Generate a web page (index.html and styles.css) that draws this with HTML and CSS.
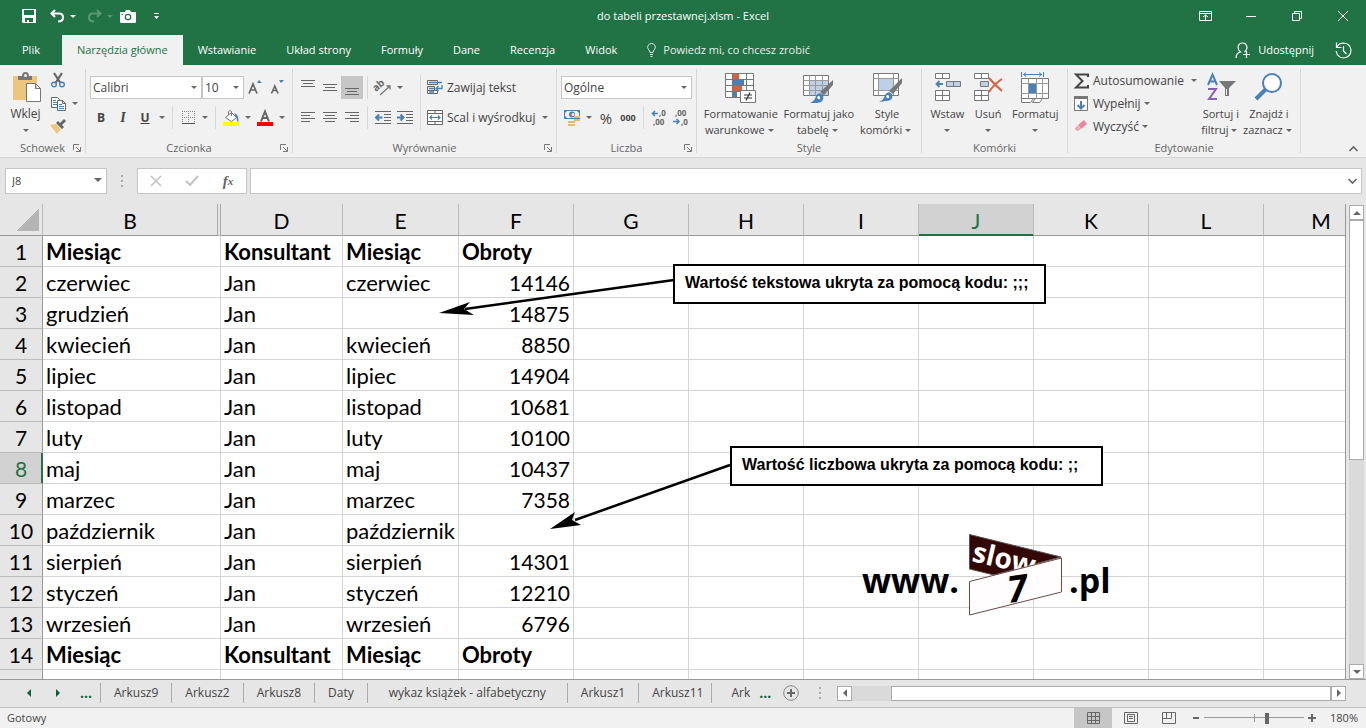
FILE: index.html
```html
<!DOCTYPE html>
<html lang="pl">
<head>
    <meta charset="UTF-8">
    <meta name="viewport" content="width=device-width, initial-scale=1.0">
    <title>do tabeli przestawnej.xlsm - Excel</title>
    <link rel="stylesheet" href="styles.css">
</head>
<body>
    <header class="titlebar">
        <div class="quick">
            <button aria-label="Zapisz"><svg width="14" height="14" viewBox="0 0 14 14"><path fill="#fff" fill-rule="evenodd" d="M0 0h14v14H1l-1-1zM2 1v5h10V1zM3 9v4h2v-2h2v2h4V9z"/></svg></button>
            <button aria-label="Cofnij"><svg width="15" height="14" viewBox="0 0 15 14"><path fill="none" stroke="#fff" stroke-width="2" d="M5 1 1.500 4.500 5 8M2 4.500h7q4 0 4 4t-5 4"/></svg><i class="caret"></i></button>
            <button aria-label="Ponów" class="off"><svg width="15" height="14" viewBox="0 0 15 14"><path fill="none" stroke="#fff" stroke-width="2" d="M10 1l3.500 3.500L10 8M13 4.500H6q-4 0-4 4t5 4"/></svg><i class="caret"></i></button>
            <button aria-label="Aparat"><svg width="16" height="13" viewBox="0 0 16 13"><path fill="#fff" d="M0 3q0-1 1-1h4l1-2h4l1 2h4q1 0 1 1v9q0 1-1 1H1q-1 0-1-1z"/><circle cx="8" cy="7" r="2.700" fill="none" stroke="#217346" stroke-width="1.200"/><path fill="#217346" d="M1.500 4h1.500v1H1.500z"/></svg></button>
            <button aria-label="Dostosuj"><svg width="5" height="7" viewBox="0 0 5 7"><path fill="#fff" d="M0 0h5v1H0zM0 3h5L2.500 6z"/></svg></button>
        </div>
        <div class="title">do tabeli przestawnej.xlsm - Excel</div>
        <div class="window">
            <button aria-label="Opcje wstążki"><svg width="13" height="10" viewBox="0 0 13 10"><path fill="none" stroke="#fff" d="M.5.500h12v9H.5zM.5 2.500h12M6.500 9V4M4 6l2.500-2L9 6"/></svg></button>
            <button aria-label="Minimalizuj"><svg width="10" height="10" viewBox="0 0 10 10"><path stroke="#fff" d="M0 5.500h10"/></svg></button>
            <button aria-label="Przywróć"><svg width="10" height="10" viewBox="0 0 10 10"><path fill="none" stroke="#fff" d="M.5 2.500h7v7h-7zM2.500 2V.5h7v7H8"/></svg></button>
            <button aria-label="Zamknij"><svg width="10" height="10" viewBox="0 0 10 10"><path stroke="#fff" d="M0 0l10 10M10 0 0 10"/></svg></button>
        </div>
    </header>

    <nav class="tabs">
        <a href="#" class="file">Plik</a>
        <a href="#" class="active">Narzędzia główne</a>
        <a href="#">Wstawianie</a>
        <a href="#">Układ strony</a>
        <a href="#">Formuły</a>
        <a href="#">Dane</a>
        <a href="#">Recenzja</a>
        <a href="#">Widok</a>
        <a href="#" class="tell"><svg width="9" height="14" viewBox="0 0 9 14"><path fill="none" stroke="#e4efe9" d="M3 9.500Q3 8 1.500 6.500 0 4.500 1 2.500 2.500.5 4.500.5T8 2.500q1 2-.5 4Q6 8 6 9.500zM3 11.500h3M3.500 13.500h2"/></svg>Powiedz mi, co chcesz zrobić</a>
        <a href="#" class="share"><svg width="16" height="17" viewBox="0 0 16 17"><path fill="none" stroke="#fff" stroke-width="1.200" d="M1 16q0-5 4.500-6Q3 8 3 5.500 3.500 1 7.500 1T12 5.500Q12 8 9.500 10M11.500 9v7M8 12.500h7"/></svg>Udostępnij</a>
        <button aria-label="Historia"><svg width="17" height="17" viewBox="0 0 17 17"><path fill="none" stroke="#fff" stroke-width="1.200" d="M2 5q2-4 6.500-4 7 .5 7.500 7.500-.5 7-7.500 7.500Q2 15.500 1.200 9M1.500.5v5h5M8.500 4v5l3 3"/></svg></button>
    </nav>

    <section class="ribbon">
        <div class="group clipboard">
            <div class="tools">
                <button class="big">
                    <svg width="30" height="32" viewBox="0 0 30 32"><path fill="#ecc57f" d="M2 4h24v24H2z"/><path fill="#777" d="M7 4h4q0-4 3.500-4T18 4h3v4H7z"/><circle cx="14.500" cy="3.500" r="1.500" fill="#f1f1f1"/><path fill="#fff" stroke="#777" d="M15.500 11.500h9l5 5v13h-14zM24.500 11.500v5h5"/></svg>
                    <span>Wklej</span><i class="caret"></i>
                </button>
                <div class="stack">
                    <button class="tool" aria-label="Wytnij"><svg width="14" height="15" viewBox="0 0 14 15"><path fill="none" stroke="#666" stroke-width="2.200" d="M3 0l6.500 10M11 0 4.500 10"/><g fill="none" stroke="#4a80b8" stroke-width="1.400"><circle cx="3" cy="11.500" r="2.300"/><circle cx="11" cy="11.500" r="2.300"/></g></svg></button>
                    <button class="tool" aria-label="Kopiuj"><svg width="15" height="14" viewBox="0 0 15 14"><path fill="#fff" stroke="#666" d="M.5.500h6l2 2v8h-8z"/><path stroke="#4a80b8" d="M2 3.500h3M2 5.500h4M2 7.500h4"/><path fill="#fff" stroke="#666" d="M6.500 3.500h5l3 3v7h-8zM11.500 3.500v3h3"/><path stroke="#4a80b8" d="M8 7.500h3M8 9.500h5M8 11.500h5"/></svg></button><i class="caret"></i>
                    <button class="tool" aria-label="Malarz formatów"><svg width="16" height="15" viewBox="0 0 16 15"><path fill="#ecc57f" d="M0 6l6-1 5 5-4 5z"/><path fill="#666" d="M6 4l2-2 2 2 4-4 2 2-4 4 2 2-2 2z"/></svg></button>
                </div>
            </div>
            <div class="caption">Schowek<svg class="launch" width="8" height="8" viewBox="0 0 8 8"><path fill="none" stroke="#777" d="M.5 6V.5H6M3 3l4 4M7.500 3v4.500H3"/></svg></div>
        </div>

        <div class="group font">
            <div class="tools rows">
                <div class="row">
                    <label class="drop face"><select aria-label="Czcionka"><option>Calibri</option></select></label>
                    <label class="drop size"><select aria-label="Rozmiar czcionki"><option>10</option></select></label>
                    <button class="tool grow" aria-label="Zwiększ"><svg width="14" height="15" viewBox="0 0 14 15"><path fill="none" stroke="#666" stroke-width="1.700" d="M1 13.500 5 4l4 9.500M2.500 10h5"/><path fill="#4a80b8" d="M9 3l2-3 3 3z"/></svg></button>
                    <button class="tool" aria-label="Zmniejsz"><svg width="14" height="15" viewBox="0 0 14 15"><path fill="none" stroke="#666" stroke-width="1.600" d="M1.500 13.500 4.800 6l3.200 7.500M3 10.500h4"/><path fill="#4a80b8" d="M9 0h5l-3 3z"/></svg></button>
                </div>
                <div class="row">
                    <button class="tool"><b>B</b></button>
                    <button class="tool italic"><b>I</b></button>
                    <button class="tool under"><b>U</b></button>
                    <i class="caret"></i>
                    <span class="sep"></span>
                    <button class="tool" aria-label="Obramowanie"><svg width="13" height="13" viewBox="0 0 13 13"><path fill="none" stroke="#888" stroke-dasharray="1 1" d="M0 .5h13M0 6.500h13M.5 0v12M6.500 0v12M12.500 0v12"/><path stroke="#555" d="M0 12.500h13"/></svg></button>
                    <i class="caret"></i>
                    <span class="sep"></span>
                    <button class="tool" aria-label="Wypełnienie"><svg width="17" height="16" viewBox="0 0 17 16"><path fill="#fff" stroke="#777" d="M2.500 7.500l6-5 5 5-5 4zM5.500 5V1.500q1.500-2 3 0V6"/><path fill="#4a80b8" d="M11 3q5 1 4.500 9-2-1-2-4z"/><path fill="#ff0" d="M0 12h16v4H0z"/></svg></button>
                    <i class="caret"></i>
                    <button class="tool" aria-label="Kolor czcionki"><svg width="16" height="16" viewBox="0 0 16 16"><path fill="none" stroke="#666" stroke-width="2" d="M4 11.500 8 1.500l4 10M5.500 8h5"/><path fill="#f00" d="M0 12h16v4H0z"/></svg></button>
                    <i class="caret"></i>
                </div>
            </div>
            <div class="caption">Czcionka<svg class="launch" width="8" height="8" viewBox="0 0 8 8"><path fill="none" stroke="#777" d="M.5 6V.5H6M3 3l4 4M7.500 3v4.500H3"/></svg></div>
        </div>

        <div class="group align">
            <div class="tools">
                <div class="rows">
                    <div class="row">
                        <button class="tool" aria-label="Do góry"><svg width="14" height="16" viewBox="0 0 14 16"><path stroke="#666" d="M0 .5h14M2 3.500h10M0 6.500h14"/></svg></button>
                        <button class="tool" aria-label="Do środka"><svg width="14" height="16" viewBox="0 0 14 16"><path stroke="#666" d="M0 4.500h14M2 7.500h10M0 10.500h14"/></svg></button>
                        <button class="tool on" aria-label="Do dołu"><svg width="14" height="16" viewBox="0 0 14 16"><path stroke="#666" d="M0 8.500h14M2 11.500h10M0 14.500h14"/></svg></button>
                        <span class="sep"></span>
                        <button class="tool" aria-label="Orientacja"><svg width="17" height="16" viewBox="0 0 17 16"><text x="1" y="12" class="ab" transform="rotate(-42 1 12)">ab</text><path fill="none" stroke="#777" stroke-width="1.300" d="M5 15 15 6M11.500 6H15v3.500"/></svg></button>
                        <i class="caret"></i>
                    </div>
                    <div class="row">
                        <button class="tool" aria-label="Do lewej"><svg width="14" height="11" viewBox="0 0 14 11"><path stroke="#666" d="M0 .5h14M0 3.500h9M0 6.500h14M0 9.500h9"/></svg></button>
                        <button class="tool" aria-label="Wyśrodkuj"><svg width="14" height="11" viewBox="0 0 14 11"><path stroke="#666" d="M0 .5h14M2 3.500h10M0 6.500h14M2 9.500h10"/></svg></button>
                        <button class="tool" aria-label="Do prawej"><svg width="14" height="11" viewBox="0 0 14 11"><path stroke="#666" d="M0 .5h14M5 3.500h9M0 6.500h14M5 9.500h9"/></svg></button>
                        <span class="sep"></span>
                        <button class="tool" aria-label="Zmniejsz wcięcie"><svg width="16" height="13" viewBox="0 0 16 13"><path stroke="#666" d="M0 .5h16M9 3.500h7M9 6.500h7M9 9.500h7M0 12.500h16"/><path fill="none" stroke="#4a80b8" stroke-width="2" d="M7.500 6.500H1M4 3.500l-3 3 3 3"/></svg></button>
                        <button class="tool" aria-label="Zwiększ wcięcie"><svg width="16" height="13" viewBox="0 0 16 13"><path stroke="#666" d="M0 .5h16M9 3.500h7M9 6.500h7M9 9.500h7M0 12.500h16"/><path fill="none" stroke="#4a80b8" stroke-width="2" d="M0 6.500h6.500M3.500 3.500l3 3-3 3"/></svg></button>
                    </div>
                </div>
                <span class="sep tall"></span>
                <div class="rows">
                    <button class="text"><svg width="16" height="15" viewBox="0 0 16 15"><path fill="none" stroke="#666" d="M.5.500h10v4H.5zM.5 6.500h7v4H.5zM.5 10.500h10v3H.5z"/><path fill="none" stroke="#4a80b8" stroke-width="1.300" d="M2 2.500h13M2 8.500h5M2 12h5M15 5v3.500H9.500M11.500 6 9 8.500l2.500 2.500"/></svg>Zawijaj tekst</button>
                    <div class="row"><button class="text"><svg width="16" height="15" viewBox="0 0 16 15"><path fill="#fff" stroke="#666" d="M.5.500h15v14H.5zM.5 3.500h15M.5 11.500h15M8 .5v3M8 11.500v3"/><path fill="none" stroke="#4a80b8" stroke-width="1.200" d="M2.500 7.500h11M5 5.500l-2 2 2 2M11 5.500l2 2-2 2"/></svg>Scal i wyśrodkuj</button><i class="caret"></i></div>
                </div>
            </div>
            <div class="caption">Wyrównanie<svg class="launch" width="8" height="8" viewBox="0 0 8 8"><path fill="none" stroke="#777" d="M.5 6V.5H6M3 3l4 4M7.500 3v4.500H3"/></svg></div>
        </div>

        <div class="group number">
            <div class="tools rows">
                <label class="drop format"><select aria-label="Format liczb"><option>Ogólne</option></select></label>
                <div class="row">
                    <button class="tool" aria-label="Format księgowy"><svg width="17" height="16" viewBox="0 0 17 16"><path fill="#4a80b8" d="M0 0h16v9H0z"/><path fill="#f1f1f1" d="M1 3l2-2h10l2 2v3l-2 2H3L1 6z"/><circle cx="8" cy="4.500" r="3" fill="#4a80b8"/><circle cx="9" cy="4.500" r="1.500" fill="#f1f1f1"/><path stroke="#ecb863" stroke-width="2" d="M10 7h6M10 10h6M4 12h7M4 15h7"/></svg></button>
                    <i class="caret"></i>
                    <button class="tool percent">%</button>
                    <button class="tool zeros">000</button>
                    <span class="sep"></span>
                    <button class="tool" aria-label="Zwiększ dziesiętne"><svg width="16" height="16" viewBox="0 0 16 16"><text x="8" y="6" class="dec">,0</text><text x="2" y="15" class="dec">,00</text><path fill="none" stroke="#4a80b8" stroke-width="1.600" d="M7 3.500H1.500M4 1 1.500 3.500 4 6"/></svg></button>
                    <button class="tool" aria-label="Zmniejsz dziesiętne"><svg width="16" height="16" viewBox="0 0 16 16"><text x="2" y="6" class="dec">,00</text><text x="8" y="15" class="dec">,0</text><path fill="none" stroke="#4a80b8" stroke-width="1.600" d="M0 11.500h6M3.500 9 6 11.500 3.500 14"/></svg></button>
                </div>
            </div>
            <div class="caption">Liczba<svg class="launch" width="8" height="8" viewBox="0 0 8 8"><path fill="none" stroke="#777" d="M.5 6V.5H6M3 3l4 4M7.500 3v4.500H3"/></svg></div>
        </div>

        <div class="group styles">
            <div class="tools">
                <button class="big">
                    <svg width="31" height="32" viewBox="0 0 31 32"><path fill="#fff" stroke="#777" d="M.5 1.500h28v24H.5z"/><path fill="none" stroke="#777" d="M.5 7.500h28M.5 13.500h28M.5 19.500h28M7.500 1.500v24M21.500 1.500v24"/><path fill="#d9603f" d="M8 2h6v5H8zM8 14h9v5H8z"/><path fill="#4a80b8" d="M8 8h11v5H8zM8 20h4v5H8z"/><path fill="#fff" stroke="#777" d="M15.500 18.500h15v12h-15z"/><path stroke="#333" stroke-width="1.200" d="M19 23h8M19 26h8M25 20.500l-4 8"/></svg>
                    <span>Formatowanie</span><span>warunkowe<i class="caret"></i></span>
                </button>
                <button class="big">
                    <svg width="31" height="32" viewBox="0 0 31 32"><path fill="#fff" stroke="#777" d="M.5 3.500h25v20H.5z"/><path fill="#bdd0e8" d="M7 9h18v14H7z"/><path fill="none" stroke="#999" d="M.5 8.500h25M.5 13.500h25M.5 18.500h25M6.500 3.500v20M12.500 3.500v20M19.500 3.500v20"/><path fill="#777" d="M30 8v5L21 23l-4-3z"/><path fill="#4a80b8" d="M7 31q5-2 6-7 3-5 7-1 2 7-6 8z"/><path fill="#fff" d="M14 25q2-2 3 0 1 3-2 2z"/></svg>
                    <span>Formatuj jako</span><span>tabelę<i class="caret"></i></span>
                </button>
                <button class="big">
                    <svg width="31" height="32" viewBox="0 0 31 32"><path fill="#fff" stroke="#777" d="M1.500 1.500h25v22h-25z"/><path fill="none" stroke="#999" d="M1.500 6.500h25M1.500 18.500h25M6.500 1.500v22M21.500 1.500v22"/><path fill="#bdd0e8" d="M7 7h14v11H7z"/><path fill="#777" d="M30 6v5L21 22l-4-3z"/><path fill="#4a80b8" d="M7 30q5-2 6-7 3-5 7-1 2 7-6 7z"/><path fill="#fff" d="M14 24q2-2 3 0 1 3-2 2z"/></svg>
                    <span>Style</span><span>komórki<i class="caret"></i></span>
                </button>
            </div>
            <div class="caption">Style</div>
        </div>

        <div class="group cells">
            <div class="tools">
                <button class="big">
                    <svg width="27" height="32" viewBox="0 0 27 32"><path fill="#fff" stroke="#777" d="M1.500 1.500h14v5h-14zM8.500 1.500v5M1.500 18.500h14v10h-14zM8.500 18.500v10M1.500 23.500h14"/><path fill="#bdd0e8" stroke="#777" d="M12.500 9.500h14v5h-14zM19.500 9.500v5"/><path fill="none" stroke="#4a80b8" stroke-width="1.800" d="M9 12H2.500M5.500 9l-3 3 3 3"/></svg>
                    <span>Wstaw</span><i class="caret"></i>
                </button>
                <button class="big">
                    <svg width="30" height="32" viewBox="0 0 30 32"><path fill="#fff" stroke="#777" d="M1.500 1.500h14v5h-14zM8.500 1.500v5M1.500 18.500h14v10h-14zM8.500 18.500v10M1.500 23.500h14"/><path fill="#bdd0e8" stroke="#777" d="M7.500 9.500h8v5h-8z"/><path fill="none" stroke="#d9603f" stroke-width="2" d="M16 6q6 7 13 13M29 7q-8 5-13 13"/></svg>
                    <span>Usuń</span><i class="caret"></i>
                </button>
                <button class="big">
                    <svg width="30" height="32" viewBox="0 0 30 32"><path fill="none" stroke="#4a80b8" d="M1.500 0v5M23.500 0v5M3 2.500h19M6 .5l-2.500 2 2.500 2M19 .5l2.500 2-2.500 2"/><path fill="#fff" stroke="#777" d="M1.500 6.500h27v20h-27zM1.500 26.500v4h9l3-4M15.500 26.500l-3 4h7l3-4"/><path fill="none" stroke="#999" d="M1.500 11.500h27M1.500 21.500h27M8.500 6.500v20M16.500 6.500v20M22.500 6.500v20"/><path fill="#4a80b8" d="M9 12h7v9H9z"/></svg>
                    <span>Formatuj</span><i class="caret"></i>
                </button>
            </div>
            <div class="caption">Komórki</div>
        </div>

        <div class="group editing">
            <div class="tools">
                <div class="list">
                    <button class="text"><svg width="15" height="16" viewBox="0 0 15 16"><path fill="none" stroke="#444" stroke-width="2" d="M14 4V1.500H2L8.500 8 2 14.500h12V12"/></svg>Autosumowanie<i class="caret"></i></button>
                    <button class="text"><svg width="15" height="16" viewBox="0 0 15 16"><path fill="#fff" stroke="#777" d="M.5.500h13v14H.5z"/><path fill="#777" d="M0 0h14v3H0z"/><path fill="none" stroke="#4a80b8" stroke-width="2" d="M7 5v7M3.500 9 7 12.500 10.500 9"/></svg>Wypełnij<i class="caret"></i></button>
                    <button class="text"><svg width="15" height="16" viewBox="0 0 15 16"><path fill="#e8879b" d="M4 6l6-5 3 4-6 5z"/><path fill="#f0a5b4" d="M1 9l2.500-2.500L6.500 10 4 12q-3 0-3-3z"/></svg>Wyczyść<i class="caret"></i></button>
                </div>
                <button class="big">
                    <svg width="30" height="32" viewBox="0 0 30 32"><path fill="none" stroke="#4a80b8" stroke-width="2" d="M2 13 6.500 2.500 11 13M3.500 9.500h6"/><path fill="none" stroke="#8d5fb0" stroke-width="2" d="M2 17h8L3 27h8"/><path fill="#777" d="M13 9h17l-7 7v8h-4v-8z"/><path fill="#f1f1f1" d="M20 17h1v6h-1z"/></svg>
                    <span>Sortuj i</span><span>filtruj<i class="caret"></i></span>
                </button>
                <button class="big">
                    <svg width="30" height="32" viewBox="0 0 30 32"><circle cx="18" cy="11" r="9" fill="#fff" stroke="#4a80b8" stroke-width="2"/><path stroke="#4a80b8" stroke-width="4" d="M12 17 2 27"/></svg>
                    <span>Znajdź i</span><span>zaznacz<i class="caret"></i></span>
                </button>
            </div>
            <div class="caption">Edytowanie</div>
        </div>
        <button class="collapse" aria-label="Zwiń wstążkę"><svg width="9" height="6" viewBox="0 0 9 6"><path fill="none" stroke="#666" stroke-width="1.600" d="M.5 5l4-4 4 4"/></svg></button>
    </section>

    <section class="formula">
        <label class="drop name"><input type="text" value="J8" aria-label="Pole nazwy"></label>
        <span class="dots"></span>
        <div class="entry">
            <button aria-label="Anuluj"><svg width="12" height="12" viewBox="0 0 12 12"><path stroke="#c4c4c4" stroke-width="1.700" d="M1 1l10 10M11 1 1 11"/></svg></button>
            <button aria-label="Wpis"><svg width="14" height="12" viewBox="0 0 14 12"><path fill="none" stroke="#c4c4c4" stroke-width="2.200" d="M1 6l4 4 8-9"/></svg></button>
            <button class="fx">f<sub>x</sub></button>
        </div>
        <div class="bar">
            <input type="text" aria-label="Pasek formuły">
            <svg width="9" height="6" viewBox="0 0 9 6"><path fill="none" stroke="#666" stroke-width="1.600" d="M.5 1l4 4 4-4"/></svg>
        </div>
    </section>

    <main class="work">
        <div class="sheet">
            <table>
                <colgroup>
                    <col class="c-head"><col class="c-b"><col class="c-d"><col class="c-e">
                    <col class="c-std" span="8">
                </colgroup>
                <thead>
                    <tr>
                        <th class="corner"></th>
                        <th class="gap">B</th><th>D</th><th>E</th><th>F</th><th>G</th><th>H</th><th>I</th><th class="sel">J</th><th>K</th><th>L</th><th>M</th>
                    </tr>
                </thead>
                <tbody id="rows"></tbody>
            </table>
            <svg class="arrows" width="760" height="340" viewBox="0 0 760 340">
                <path stroke="#000" stroke-width="2.500" d="M674 76 465 105"/>
                <path d="M439 109l31-11-6 7 10 6z"/>
                <path stroke="#000" stroke-width="2.500" d="M730 261 575 316"/>
                <path d="M550 325l25-17-3 8 9 5z"/>
            </svg>
            <div class="callout text-note">Wartość tekstowa ukryta za pomocą kodu: ;;;</div>
            <div class="callout number-note">Wartość liczbowa ukryta za pomocą kodu: ;;</div>
            <svg class="logo" width="260" height="90" viewBox="0 0 260 90">
                <text x="2" y="62" class="url">www.</text>
                <path fill="#330705" stroke="#555" d="M109.500 3.500 201 26 134 44 109.500 38z"/>
                <text x="111" y="30" class="slow" transform="rotate(13 111 30)">slow</text>
                <path fill="#fffdfd" stroke="#6b4a48" d="M109.500 50.500 201.500 27v34l-92 23z"/>
                <text x="149" y="72" class="seven" transform="rotate(-8 149 72)">7</text>
                <text x="209" y="62" class="url">.pl</text>
            </svg>
        </div>
        <div class="vscroll">
            <button aria-label="W górę"><i class="tri up"></i></button>
            <div class="track"><div class="thumb"></div></div>
            <button aria-label="W dół"><i class="tri down"></i></button>
        </div>
    </main>

    <nav class="sheets">
        <button class="nav" aria-label="Poprzedni"><i class="tri left"></i></button>
        <button class="nav" aria-label="Następny"><i class="tri right"></i></button>
        <span class="more">...</span>
        <a href="#">Arkusz9</a><a href="#">Arkusz2</a><a href="#">Arkusz8</a><a href="#">Daty</a><a href="#" class="long">wykaz książek - alfabetyczny</a><a href="#">Arkusz1</a><a href="#" class="tight">Arkusz11</a><a href="#" class="cut">Ark</a>
        <span class="more">...</span>
        <button class="add" aria-label="Nowy arkusz"><svg width="16" height="16" viewBox="0 0 16 16"><circle cx="8" cy="8" r="7.300" fill="none" stroke="#888"/><path stroke="#666" stroke-width="2" d="M8 4v8M4 8h8"/></svg></button>
        <span class="dots"></span>
        <div class="hscroll">
            <button aria-label="W lewo"><i class="tri left"></i></button>
            <div class="track"><div class="thumb"></div></div>
            <button aria-label="W prawo"><i class="tri right"></i></button>
        </div>
    </nav>

    <footer class="status">
        <span>Gotowy</span>
        <div class="views">
            <button class="on" aria-label="Normalny"><svg width="13" height="12" viewBox="0 0 13 12"><path fill="none" stroke="#666" d="M.5.500h12v11H.5zM.5 4.500h12M.5 8.500h12M4.500.5v11M8.500.5v11"/></svg></button>
            <button aria-label="Układ strony"><svg width="14" height="12" viewBox="0 0 14 12"><path fill="none" stroke="#666" d="M.5.500h13v11H.5zM3.500 2.500h7v7h-7zM5 4.500h4M5 6.500h4"/></svg></button>
            <button aria-label="Podział stron"><svg width="14" height="12" viewBox="0 0 14 12"><path fill="none" stroke="#666" d="M.5.500h13v11H.5zM4.500.5v6M9.500.5v6M.5 6.500h9"/></svg></button>
        </div>
        <div class="zoom">
            <button aria-label="Pomniejsz"><svg width="8" height="8" viewBox="0 0 8 8"><path fill="#666" d="M1 3h6v2H1z"/></svg></button>
            <input type="range" min="0" max="100" value="63" aria-label="Powiększenie">
            <button aria-label="Powiększ"><svg width="8" height="8" viewBox="0 0 8 8"><path fill="#666" d="M0 3h3V0h2v3h3v2H5v3H3V5H0z"/></svg></button>
        </div>
        <span class="level">180%</span>
    </footer>

    <script>
        const months = [
            ["czerwiec", "czerwiec", "14146"],
            ["grudzień", "", "14875"],
            ["kwiecień", "kwiecień", "8850"],
            ["lipiec", "lipiec", "14904"],
            ["listopad", "listopad", "10681"],
            ["luty", "luty", "10100"],
            ["maj", "maj", "10437"],
            ["marzec", "marzec", "7358"],
            ["październik", "październik", ""],
            ["sierpień", "sierpień", "14301"],
            ["styczeń", "styczeń", "12210"],
            ["wrzesień", "wrzesień", "6796"]
        ];
        const blank = "<td></td>".repeat(7);
        const heading = n => `<tr class="bold"><th>${n}</th><td>Miesiąc</td><td>Konsultant</td><td>Miesiąc</td><td>Obroty</td>${blank}</tr>`;

        document.getElementById("rows").innerHTML =
            heading(1) +
            months.map(([month, copy, total], i) => `
                <tr>
                    <th class="${i + 2 === 8 ? "sel" : ""}">${i + 2}</th>
                    <td>${month}</td>
                    <td>Jan</td>
                    <td>${copy}</td>
                    <td class="num">${total}</td>
                    ${blank}
                </tr>`).join("") +
            heading(14) +
            `<tr><th></th><td></td><td></td><td></td><td></td>${blank}</tr>`;
    </script>
</body>
</html>
```
FILE: styles.css
```css
* {
    box-sizing: border-box;
}
body {
    margin: 0;
    height: 100vh;
    display: flex;
    flex-direction: column;
    overflow: hidden;
    font-family: "Open Sans", "Noto Sans", sans-serif;
    font-size: 12px;
    line-height: 16px;
    color: #444;
    background: #e6e6e6;
}
button {
    padding: 0;
    border: 0;
    background: none;
    font: inherit;
    color: inherit;
    display: flex;
    align-items: center;
    justify-content: center;
}
a {
    color: inherit;
    text-decoration: none;
}
svg {
    display: block;
    flex: none;
    overflow: visible;
}

/* small drop-down arrow */
.caret {
    width: 12px;
    flex: none;
    display: inline-flex;
    justify-content: center;
    align-items: center;
}
.caret::before, .drop::after {
    content: "";
    border: 3px solid transparent;
    border-top-color: #666;
    border-bottom: 0;
}

/* title bar */
.titlebar {
    height: 35px;
    flex: none;
    display: grid;
    grid-template-columns: 1fr auto 1fr;
    align-items: center;
    padding-bottom: 3px;
    background: #217346;
    font-size: 11px;
    color: #fff;
}
.quick {
    display: flex;
    align-items: center;
    padding-left: 22px;
    gap: 14px;
}
.quick .caret {
    width: 16px;
}
.quick .caret::before {
    border-top-color: #fff;
}
.quick .off {
    margin-left: -8px;
    opacity: 0.25;
}
.quick .off + button {
    margin-left: -12px;
}
.quick button:last-child {
    margin-left: 4px;
}
.window {
    display: flex;
    justify-content: flex-end;
}
.window button {
    width: 46px;
    height: 30px;
}

/* ribbon tabs */
.tabs {
    height: 30px;
    flex: none;
    display: flex;
    background: #217346;
    font-size: 11px;
    color: #fff;
}
.tabs a {
    display: flex;
    align-items: center;
    padding: 0 15px;
    white-space: nowrap;
}
.tabs .file {
    padding: 0 22px;
}
.tabs .active {
    background: #f1f1f1;
    color: #217346;
}
.tabs .tell {
    gap: 7px;
    color: #e4efe9;
}
.tabs .share {
    margin-left: auto;
    padding-right: 7px;
    gap: 7px;
}
.tabs button {
    width: 45px;
}

/* ribbon */
.ribbon {
    height: 93px;
    flex: none;
    display: flex;
    background: #f1f1f1;
    border-bottom: 1px solid #d5d5d5;
}
.group {
    flex: none;
    display: flex;
    flex-direction: column;
    justify-content: space-between;
    margin: 4px 0;
    padding: 0 4px;
    border-right: 1px solid #d8d8d8;
}
.clipboard { width: 86px; }
.font { width: 207px; }
.align { width: 264px; }
.number { width: 140px; }
.styles { width: 225px; }
.cells { width: 146px; }
.editing { width: 233px; }
.tools {
    display: flex;
}
.rows {
    display: flex;
    flex-direction: column;
    gap: 7px;
    padding-top: 7px;
}
.rows .rows {
    padding-top: 0;
}
.row {
    display: flex;
    align-items: center;
    height: 23px;
}
.tool {
    width: 22px;
    height: 23px;
    flex: none;
}
.tool.on {
    background: #c6c6c6;
}
.italic {
    font-family: "Liberation Serif", serif;
    font-style: italic;
    font-size: 14px;
}
.under {
    text-decoration: underline;
}
.percent {
    font-size: 15px;
}
.zeros {
    font-size: 9px;
    font-weight: bold;
}
.ab {
    font-size: 10px;
    font-weight: bold;
    fill: #666;
}
.dec {
    font-size: 8px;
    font-weight: bold;
    fill: #666;
}
.sep {
    width: 1px;
    height: 23px;
    margin: 0 4px;
    background: #d8d8d8;
}
.sep.tall {
    height: 55px;
    margin-top: 6px;
}
.text {
    height: 23px;
    gap: 4px;
    padding-left: 2px;
    justify-content: flex-start;
    white-space: nowrap;
}
.align .row .text + .caret {
    margin-left: 4px;
}
.big {
    flex: 1 1 auto;
    flex-direction: column;
    justify-content: flex-start;
    font-size: 11px;
    white-space: nowrap;
}
.clipboard .big {
    font-size: 12px;
}
.big svg {
    margin: 3px 0 2px;
}
.big .caret {
    height: 16px;
}
.big span {
    display: flex;
}
.stack {
    display: grid;
    grid-template-columns: 22px 12px;
    grid-template-rows: repeat(3, 23px);
}
.stack .tool:first-child {
    grid-column: 1 / 3;
}
.list .caret {
    margin-left: -4px;
}
.list .text:first-child .caret {
    margin-left: 0;
}
.caption {
    position: relative;
    text-align: center;
    font-size: 11px;
    line-height: 10px;
    color: #666;
}
.launch {
    position: absolute;
    right: 0;
    top: 1px;
}
.collapse {
    margin: auto 8px 5px auto;
}

/* drop-down boxes */
.drop {
    position: relative;
    display: flex;
    flex: none;
    height: 23px;
    border: 1px solid #c6c6c6;
    background: #fff;
}
.drop::after {
    position: absolute;
    right: 4px;
    top: 9px;
    pointer-events: none;
}
.drop select, .drop input {
    appearance: none;
    width: 100%;
    border: 0;
    padding: 0 2px;
    background: none;
    font: inherit;
    color: #444;
}
.face {
    width: 112px;
}
.size {
    width: 42px;
}

/* formula bar */
.formula {
    height: 46px;
    flex: none;
    display: flex;
    align-items: flex-start;
    padding: 10px 4px 0 5px;
}
.name {
    width: 102px;
    height: 26px;
    font-size: 11px;
}
.name input {
    padding: 0 6px;
}
.name::after {
    border-width: 4px 4px 0;
}
.dots {
    width: 2px;
    height: 12px;
    margin: 7px 14px;
    background: repeating-linear-gradient(#aaa 0 2px, transparent 2px 5px);
}
.entry {
    display: flex;
    width: 110px;
    height: 26px;
    border: 1px solid #c6c6c6;
    background: #fff;
}
.entry button {
    flex: 1;
}
.fx {
    font: italic bold 15px "Liberation Serif", serif;
    color: #666;
}
.fx sub {
    font-size: 11px;
}
.bar {
    flex: 1;
    display: flex;
    align-items: center;
    height: 26px;
    margin-left: 3px;
    padding-right: 4px;
    border: 1px solid #c6c6c6;
    background: #fff;
}
.bar input {
    flex: 1;
    border: 0;
    background: none;
}

/* worksheet */
.work {
    flex: 1;
    min-height: 0;
    display: flex;
    border-bottom: 1px solid #999;
}
.sheet {
    position: relative;
    flex: 1;
    overflow: hidden;
    border-right: 1px solid #999;
    background: #fff;
}
table {
    width: 1379px;
    table-layout: fixed;
    border-collapse: separate;
    border-spacing: 0;
    font-family: Lato, "Open Sans", sans-serif;
    font-size: 22px;
    line-height: 28px;
    color: #000;
}
.c-head { width: 43px; }
.c-b { width: 178px; }
.c-d { width: 122px; }
.c-e { width: 116px; }
.c-std { width: 115px; }
th, td {
    height: 31px;
    padding: 2px 3px 0;
    border-right: 1px solid #d4d4d4;
    border-bottom: 1px solid #d4d4d4;
    text-align: left;
    white-space: nowrap;
}
th {
    padding: 2px 0 0;
    background: #e6e6e6;
    border-color: #bbb;
    font-size: 21px;
    font-weight: normal;
    text-align: center;
}
thead th {
    height: 32px;
    border-bottom-color: #999;
}
tbody th {
    border-right-color: #999;
}
.gap {
    border-right: 4px double #aaa;
}
.corner {
    background: linear-gradient(135deg, transparent 50%, #b4b4b4 50%) 17px 5px / 22px 22px no-repeat #e6e6e6;
}
thead .sel, tbody .sel {
    background: #d2d2d2;
    color: #217346;
}
thead .sel {
    border-bottom-color: #217346;
    box-shadow: inset 0 -1px #217346;
}
tbody .sel {
    border-right-color: #217346;
    box-shadow: inset -1px 0 #217346;
}
.bold td {
    font-weight: bold;
}
.num {
    text-align: right;
    font-size: 21px;
}

/* notes drawn over the cells */
.arrows {
    position: absolute;
    left: 0;
    top: 0;
}
.callout {
    position: absolute;
    width: 373px;
    height: 40px;
    padding-left: 10px;
    border: 2px solid #000;
    background: #fff;
    font: bold 16px/34px "Liberation Sans", Arial, sans-serif;
    white-space: nowrap;
    color: #000;
}
.text-note {
    left: 673px;
    top: 60px;
}
.number-note {
    left: 730px;
    top: 242px;
}
.logo {
    position: absolute;
    left: 860px;
    top: 327px;
}
.url {
    font-size: 34px;
    font-weight: bold;
}
.slow {
    font-size: 28px;
    font-weight: bold;
    fill: #fff;
}
.seven {
    font-size: 37px;
    font-weight: bold;
    font-style: italic;
}

/* scroll bars */
.tri {
    border: 4px solid transparent;
}
.up { border-bottom-color: #666; border-top: 0; }
.down { border-top-color: #666; border-bottom: 0; }
.left { border-right-color: #666; border-left: 0; }
.right { border-left-color: #666; border-right: 0; }
.vscroll {
    flex: none;
    width: 20px;
    display: flex;
    flex-direction: column;
    padding: 1px 2px 0 3px;
}
.vscroll button, .hscroll button {
    flex: none;
    width: 15px;
    height: 15px;
    border: 1px solid #ababab;
    background: #fff;
}
.track {
    flex: 1;
    display: flex;
    background: #dadada;
}
.thumb {
    border: 1px solid #ababab;
    background: #fff;
}
.vscroll .thumb {
    width: 100%;
    height: 54%;
}

/* sheet tabs */
.sheets {
    flex: none;
    height: 28px;
    display: flex;
    align-items: center;
    padding: 0 20px 1px 14px;
    border-bottom: 1px solid #c0c0c0;
}
.sheets a {
    height: 20px;
    padding: 0 13px;
    border-left: 1px solid #ababab;
    line-height: 19px;
    white-space: nowrap;
}
.sheets .long {
    padding: 0 21px;
}
.sheets .tight {
    padding-right: 8px;
}
.sheets .cut {
    padding: 0 9px 0 19px;
}
.nav {
    width: 29px;
}
.nav .left { border-right-color: #0a6332; }
.nav .right { border-left-color: #0a6332; }
.more {
    margin-right: 8px;
    font-weight: bold;
    font-size: 14px;
    color: #0a6332;
}
.nav + .more {
    margin-left: 8px;
}
.add {
    margin-left: 4px;
}
.sheets .dots {
    margin: 0 16px 0 20px;
}
.hscroll {
    flex: 1;
    display: flex;
}
.hscroll .track {
    justify-content: flex-end;
}
.hscroll .thumb {
    width: 92%;
}

/* status bar */
.status {
    flex: none;
    height: 20px;
    display: flex;
    align-items: center;
    padding: 0 8px 0 7px;
    background: #f1f1f1;
    font-size: 11px;
}
.views {
    display: flex;
    margin-left: auto;
}
.views button {
    width: 38px;
    height: 20px;
}
.views .on {
    background: #c6c6c6;
}
.zoom {
    display: flex;
    align-items: center;
    margin: 0 14px 0 4px;
}
.zoom input {
    appearance: none;
    width: 100px;
    height: 12px;
    margin: 0 4px;
    background: linear-gradient(#999, #999) 50px 2px / 1px 8px no-repeat, linear-gradient(#999, #999) 0 5px / 100% 1px no-repeat;
}
.zoom input::-webkit-slider-thumb {
    appearance: none;
    width: 4px;
    height: 11px;
    background: #666;
}
```
